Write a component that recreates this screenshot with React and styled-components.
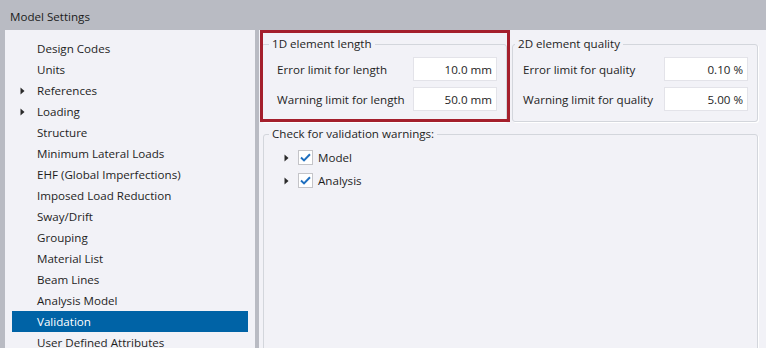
import React from 'react';
import styled, { createGlobalStyle } from 'styled-components';

const GlobalStyle = createGlobalStyle`
  html, body {
    margin: 0;
    padding: 0;
  }
  body {
    background: #b9bbc3;
    font-family: "Segoe UI", "Open Sans", "Noto Sans", sans-serif;
    font-size: 11.6px;
    color: #1e1e1e;
  }
`;

const Window = styled.div`
  width: 766px;
  height: 348px;
  overflow: hidden;
  display: flex;
  flex-direction: column;
  background: #b9bbc3;
`;

const TitleBar = styled.div`
  height: 30px;
  flex: none;
  display: flex;
  align-items: center;
  padding: 2px 0 0 10px;
  box-sizing: border-box;
  color: #1b1b1b;
`;

const Body = styled.div`
  flex: 1;
  min-height: 0;
  display: flex;
  gap: 4px;
  padding-left: 5px;
`;

const Sidebar = styled.ul`
  width: 250px;
  flex: none;
  box-sizing: border-box;
  margin: 0;
  padding: 8px 7px 0;
  list-style: none;
  background: #f2f2f7;
`;

const Item = styled.li`
  height: 21px;
  display: flex;
  align-items: center;
  background: ${p => (p.$selected ? '#0063a6' : 'transparent')};
  color: ${p => (p.$selected ? '#ffffff' : '#1e1e1e')};
  white-space: nowrap;
`;

const Expander = styled.span`
  width: 25px;
  flex: none;
  display: flex;
  align-items: center;
  padding-left: 8px;
  box-sizing: border-box;
`;

const Main = styled.div`
  flex: 1;
  display: flex;
  flex-direction: column;
  background: #f2f2f7;
  padding: 6px 8px 0 2px;
`;

const TopRow = styled.div`
  display: flex;
  gap: 5px;
`;

const Annotated = styled.div`
  position: relative;
  display: flex;

  &::after {
    content: '';
    position: absolute;
    top: -6px;
    left: -1px;
    right: -3px;
    bottom: 0;
    border: 3px solid #a41f2c;
    pointer-events: none;
  }
`;

const Group = styled.fieldset`
  margin: 0;
  min-width: 0;
  width: ${p => p.$width}px;
  box-sizing: border-box;
  border: 1px solid #d3d6dc;
  border-radius: 3px;
  box-shadow: 1px 1px 0 #ffffff;
  padding: ${p => p.$padding ?? '5px 9px 10px 0'};
  display: flex;
  flex-direction: column;
  gap: ${p => p.$gap ?? 6}px;
`;

const Legend = styled.legend`
  margin-left: ${p => p.$offset}px;
  padding: 0 3px;
  line-height: 16px;
`;

const FieldRow = styled.div`
  display: flex;
  align-items: center;
  justify-content: space-between;
  padding-left: ${p => p.$inset}px;
`;

const ValueBox = styled.input`
  width: 84px;
  height: 24px;
  box-sizing: border-box;
  border: 1px solid #e3e3e9;
  background: #ffffff;
  text-align: right;
  padding: 0 4px 0 0;
  margin: 0;
  font: inherit;
  color: #1e1e1e;
  outline: none;
`;

const ChecksGroup = styled(Group)`
  margin: 4px 0 0 2px;
  width: auto;
  height: 240px;
  flex: none;
`;

const TreeRow = styled.div`
  height: 23px;
  display: flex;
  align-items: center;
  padding-left: 20px;
`;

const Box = styled.span`
  width: 15px;
  height: 15px;
  box-sizing: border-box;
  border: 1px solid #c4c4c8;
  background: #ffffff;
  display: flex;
  align-items: center;
  justify-content: center;
  margin: 0 5px 0 9px;
`;

const Arrow = () => (
  <svg width="5" height="8" viewBox="0 0 5 8">
    <path d="M0.5 0.5 L4.5 4 L0.5 7.5 Z" fill="#2a2a2a" />
  </svg>
);

const Check = () => (
  <svg width="11" height="9" viewBox="0 0 11 9">
    <path d="M1 4.6 L4 7.4 L10 1.2" fill="none" stroke="#1f6fbf" strokeWidth="2" />
  </svg>
);

const menu = [
  { label: 'Design Codes' },
  { label: 'Units' },
  { label: 'References', expandable: true },
  { label: 'Loading', expandable: true },
  { label: 'Structure' },
  { label: 'Minimum Lateral Loads' },
  { label: 'EHF (Global Imperfections)' },
  { label: 'Imposed Load Reduction' },
  { label: 'Sway/Drift' },
  { label: 'Grouping' },
  { label: 'Material List' },
  { label: 'Beam Lines' },
  { label: 'Analysis Model' },
  { label: 'Validation', selected: true },
  { label: 'User Defined Attributes' },
];

const lengthFields = [
  { label: 'Error limit for length', value: '10.0 mm' },
  { label: 'Warning limit for length', value: '50.0 mm' },
];

const qualityFields = [
  { label: 'Error limit for quality', value: '0.10 %' },
  { label: 'Warning limit for quality', value: '5.00 %' },
];

export default function App() {
  return (
    <Window>
      <GlobalStyle />
      <TitleBar>Model Settings</TitleBar>
      <Body>
        <Sidebar>
          {menu.map(m => (
            <Item key={m.label} $selected={m.selected}>
              <Expander>{m.expandable && <Arrow />}</Expander>
              {m.label}
            </Item>
          ))}
        </Sidebar>

        <Main>
          <TopRow>
            <Annotated>
              <Group $width={246}>
                <Legend $offset={7}>1D element length</Legend>
                {lengthFields.map(f => (
                  <FieldRow key={f.label} $inset={15}>
                    {f.label}
                    <ValueBox readOnly defaultValue={f.value} />
                  </FieldRow>
                ))}
              </Group>
            </Annotated>
            <Group $width={246}>
              <Legend $offset={2}>2D element quality</Legend>
              {qualityFields.map(f => (
                <FieldRow key={f.label} $inset={10}>
                  {f.label}
                  <ValueBox readOnly defaultValue={f.value} />
                </FieldRow>
              ))}
            </Group>
          </TopRow>

          <ChecksGroup $padding="4px 0 0 0" $gap={0}>
            <Legend $offset={5}>Check for validation warnings:</Legend>
            {['Model', 'Analysis'].map(name => (
              <TreeRow key={name}>
                <Arrow />
                <Box><Check /></Box>
                {name}
              </TreeRow>
            ))}
          </ChecksGroup>
        </Main>
      </Body>
    </Window>
  );
}
